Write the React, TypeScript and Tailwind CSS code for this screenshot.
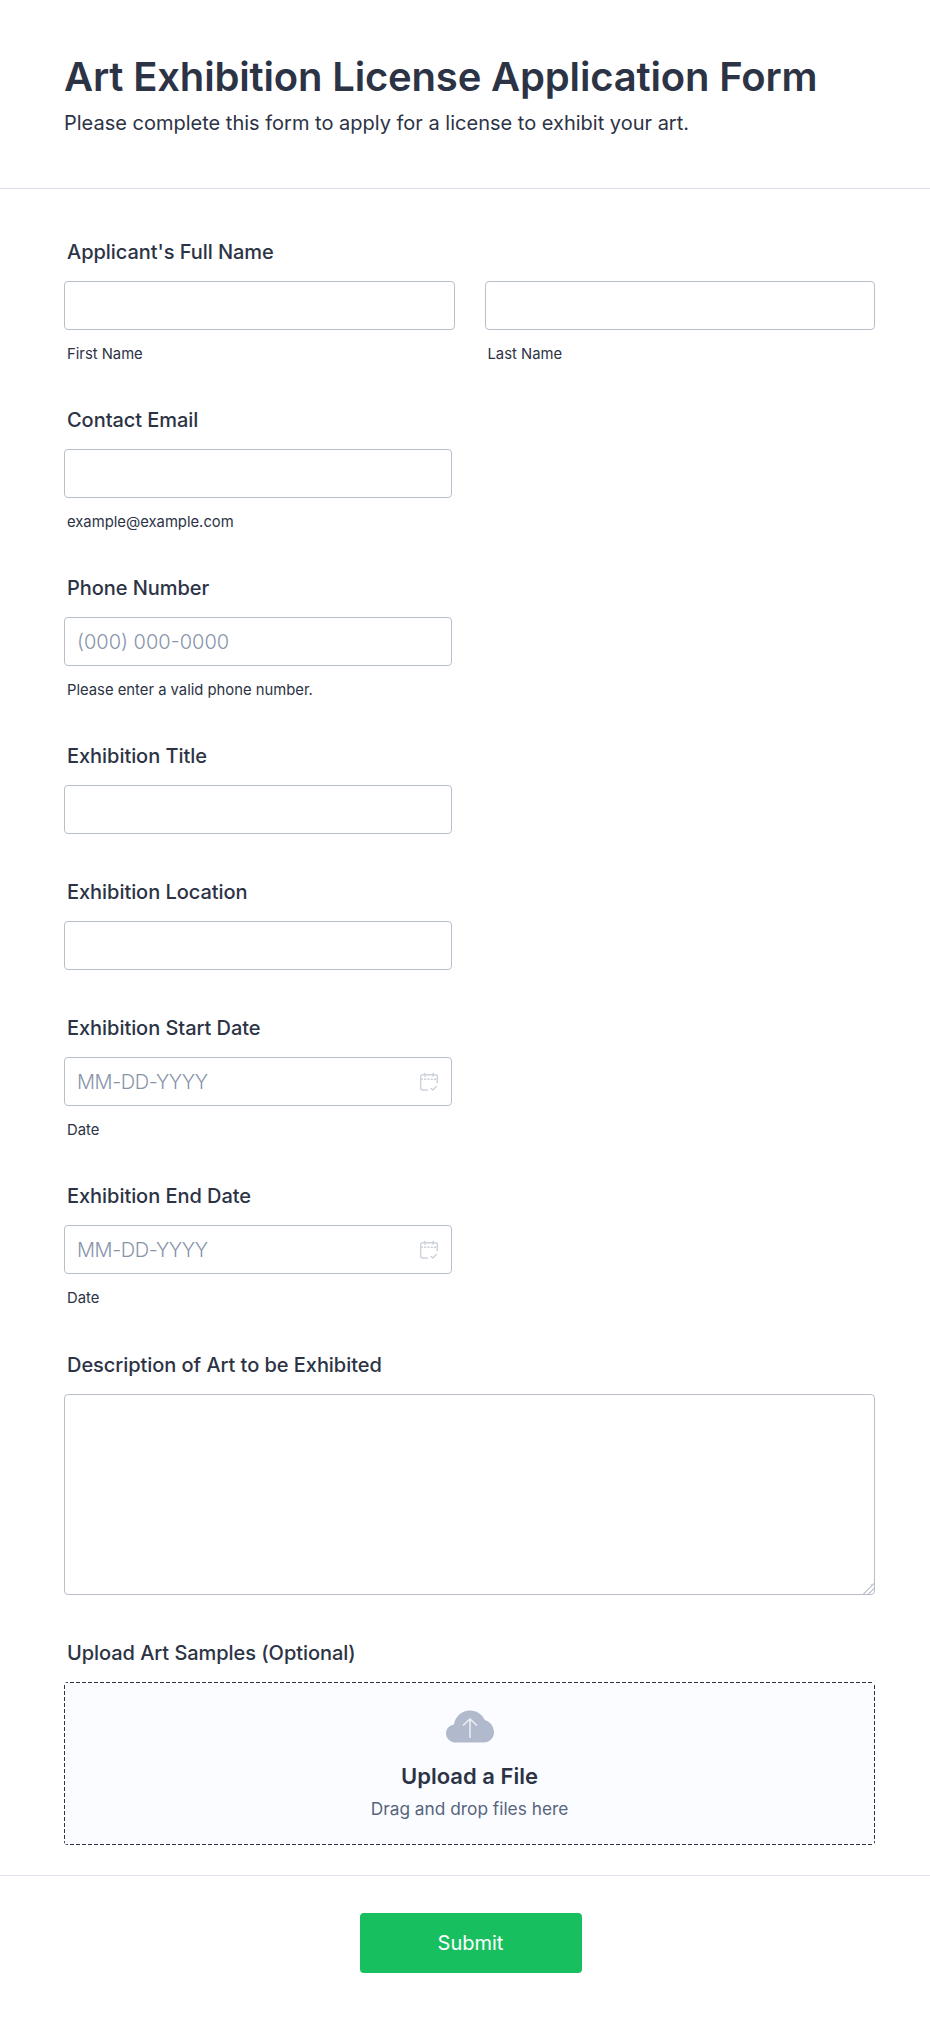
const inputClass =
  "block h-[49px] rounded-[4px] border border-[#b9bfca] bg-white px-3 text-[20px] font-light text-[#2c3345] placeholder:text-[#8894ab] outline-none";

function CalendarIcon() {
  return (
    <svg className="absolute right-[13px] top-[15px]" width="20" height="20" viewBox="0 0 18 18" fill="none" stroke="#cdd2dd" strokeWidth="1.3">
      <path d="M8 16.2H3.2a1.7 1.7 0 0 1-1.7-1.7V4.200a1.7 1.7 0 0 1 1.7-1.7h11.6a1.7 1.7 0 0 1 1.7 1.7v6" />
      <path d="M1.5 6.500h15" strokeDasharray="2 1" />
      <path d="M5.200 0.800v3.400M12.800 0.800v3.400" />
      <path d="M10.500 14.400l1.900 1.800 3.600-3.600" />
    </svg>
  );
}

function CloudIcon() {
  return (
    <svg width="48" height="33" viewBox="0 0 48 33">
      <path
        d="M10 32.500C4.500 32.500 0 28.400 0 23.400c0-4.600 3.400-8.300 7.900-9C9.400 6.200 16 .5 24 .5c6.700 0 12.500 4 14.900 9.800C44 11.500 48 16.500 48 22.600c0 5.500-4.500 9.900-10 9.900H10z"
        fill="#b1b9cc"
      />
      <path d="M24 28V9M17 15.500L24 9l7 6.500" fill="none" stroke="#eef0f5" strokeWidth="1.500" />
    </svg>
  );
}

function Label({ children }: { children: React.ReactNode }) {
  return <label className="block pl-[3px] pt-[1px] text-[20px] leading-[24px] font-medium tracking-[-0.05px] text-[#2c3345] mb-[17px]">{children}</label>;
}

function Sub({ children }: { children: React.ReactNode }) {
  return <p className="pl-[3px] mt-[15px] text-[14.800px] leading-[18px] text-[#2c3345]">{children}</p>;
}

function DateField({ label }: { label: string }) {
  return (
    <div>
      <Label>{label}</Label>
      <div className="relative w-[388px]">
        <input className={inputClass + " w-full tracking-[-0.400px]"} placeholder="MM-DD-YYYY" />
        <CalendarIcon />
      </div>
      <Sub>Date</Sub>
    </div>
  );
}

export default function App() {
  return (
    <div className="min-h-[2022px] bg-white font-['Inter',sans-serif] text-[#2c3345]">
      {/* header */}
      <header className="h-[189px] border-b border-[#dadee8] px-[64px] pt-[52px]">
        <h1 className="text-[40px] leading-[50px] font-semibold tracking-[-0.170px]">Art Exhibition License Application Form</h1>
        <p className="text-[20px] leading-[24px] mt-[9px]">Please complete this form to apply for a license to exhibit your art.</p>
      </header>

      <main className="px-[64px] pt-[50px] flex flex-col">
        <div className="mb-[44px]">
          <Label>Applicant's Full Name</Label>
          <div className="grid grid-cols-2 gap-[30px] w-[811px]">
            <div>
              <input className={inputClass + " w-full"} />
              <Sub>First Name</Sub>
            </div>
            <div>
              <input className={inputClass + " w-full"} />
              <Sub>Last Name</Sub>
            </div>
          </div>
        </div>

        <div className="mb-[44px]">
          <Label>Contact Email</Label>
          <input className={inputClass + " w-[388px]"} />
          <Sub>example@example.com</Sub>
        </div>

        <div className="mb-[44px]">
          <Label>Phone Number</Label>
          <input className={inputClass + " w-[388px]"} placeholder="(000) 000-0000" />
          <Sub>Please enter a valid phone number.</Sub>
        </div>

        <div className="mb-[45px]">
          <Label>Exhibition Title</Label>
          <input className={inputClass + " w-[388px]"} />
        </div>

        <div className="mb-[45px]">
          <Label>Exhibition Location</Label>
          <input className={inputClass + " w-[388px]"} />
        </div>

        <div className="mb-[44px]">
          <DateField label="Exhibition Start Date" />
        </div>

        <div className="mb-[45px]">
          <DateField label="Exhibition End Date" />
        </div>

        <div className="mb-[45px]">
          <Label>Description of Art to be Exhibited</Label>
          <textarea className="block h-[201px] w-[811px] rounded-[4px] border border-[#b9bfca] bg-white outline-none [&::-webkit-resizer]:bg-[linear-gradient(135deg,transparent_60%,#c8cdd8_60%,#c8cdd8_67%,transparent_67%,transparent_78%,#c8cdd8_78%,#c8cdd8_85%,transparent_85%)]" />
        </div>

        <div>
          <Label>Upload Art Samples (Optional)</Label>
          {/* dashed outline has longer dashes than the browser's own, so it's painted as backgrounds */}
          <div className="flex h-[163px] w-[811px] flex-col items-center rounded-[4px] pt-[28px] [background:repeating-linear-gradient(90deg,#2c3345_0_4px,transparent_4px_6px)_0_0/100%_1px_no-repeat,repeating-linear-gradient(90deg,#2c3345_0_4px,transparent_4px_6px)_0_100%/100%_1px_no-repeat,repeating-linear-gradient(0deg,#2c3345_0_4px,transparent_4px_6px)_0_0/1px_100%_no-repeat,repeating-linear-gradient(0deg,#2c3345_0_4px,transparent_4px_6px)_100%_0/1px_100%_no-repeat,#fbfcff]">
            <CloudIcon />
            <p className="mt-[18px] text-[22px] leading-[30px] font-semibold">Upload a File</p>
            <p className="text-[17.300px] leading-[24px] text-[#57647e] mt-[6px]">Drag and drop files here</p>
          </div>
        </div>
      </main>

      {/* footer */}
      <footer className="mt-[30px] flex justify-center border-t border-[#e3e5ee] pl-[11px] pt-[37px]">
        <button className="h-[60px] w-[222px] rounded-[4px] bg-[#18bf5f] text-[20px] text-white">Submit</button>
      </footer>
    </div>
  );
}
